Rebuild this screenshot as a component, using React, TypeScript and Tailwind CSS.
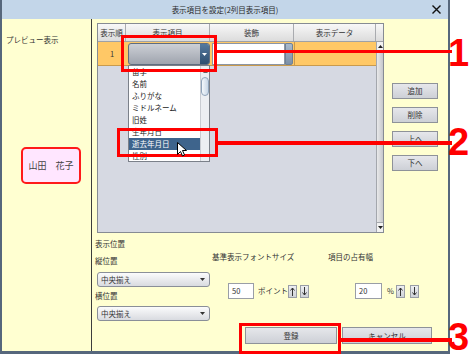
import type { ReactNode } from "react";

const items = ["苗字", "名前", "ふりがな", "ミドルネーム", "旧姓", "生年月日", "逝去年月日", "性別"];

const Tri = ({ color = "#333", up = false }: { color?: string; up?: boolean }) => (
  <svg width="5" height="3" viewBox="0 0 5 3">
    <path d={up ? "M0 3h5L2.5 0z" : "M0 0h5L2.5 3z"} fill={color} />
  </svg>
);

const Btn = ({ children, className = "" }: { children: ReactNode; className?: string }) => (
  <div
    className={`flex items-center justify-center border border-[#8e9299] bg-linear-to-b from-[#e6e7eb] to-[#cdd0d6] text-[#333] ${className}`}>
    {children}
  </div>
);

const Spin = ({ up }: { up?: boolean }) => (
  <div className="flex h-[13px] w-[9px] items-center justify-center border border-[#9a9ea6] bg-linear-to-b from-[#eeeff2] to-[#cfd2d8]">
    <svg width="5" height="9" viewBox="0 0 5 9">
      {up ? (
        <path d="M2.5 1v8M0.5 3.5L2.5 1l2 2.5" stroke="#333" strokeWidth="1" fill="none" />
      ) : (
        <path d="M2.5 0v8M0.5 5.5L2.5 8l2-2.5" stroke="#333" strokeWidth="1" fill="none" />
      )}
    </svg>
  </div>
);

const Select = ({ label }: { label: string }) => (
  <div className="flex h-[15px] w-[113px] items-center justify-between rounded-[3px] border border-[#8a8f98] bg-linear-to-b from-[#fbfbfc] to-[#d9dbe0] pl-[3px] pr-[4px]">
    <span>{label}</span>
    <Tri />
  </div>
);

const HeaderCell = ({ w, children }: { w: string; children?: ReactNode }) => (
  <div className={`flex ${w} items-center justify-center border-r border-[#a9abaf]`}>{children}</div>
);

const Table = () => (
  <div className="flex h-[210px] w-[287px] flex-col border border-[#868b93] bg-[#d6d9e2]">
    <div className="flex h-[18px] border-b border-[#9ea1a6] bg-linear-to-b from-[#f8f8f8] to-[#dcdcdc] text-[#333]">
      <HeaderCell w="w-[28px]">表示順</HeaderCell>
      <HeaderCell w="w-[84px]">表示項目</HeaderCell>
      <HeaderCell w="w-[84px]">装飾</HeaderCell>
      <HeaderCell w="w-[82px]">表示データ</HeaderCell>
      <div className="w-[7px]" />
    </div>
    <div className="flex flex-1">
      <div className="flex-1">
        <div className="flex h-[24px] border-b border-[#c99a4c] bg-[#ffc866]">
          <div className="flex w-[28px] items-center justify-center">1</div>
          <div className="relative w-[84px] pl-[2px] pt-[1px]">
            <div className="flex h-[22px] w-[82px] overflow-hidden rounded-[3px] border border-[#5f6d80] bg-linear-to-b from-[#cdd0d6] to-[#9fa4ae]">
              <div className="flex-1" />
              <div className="flex w-[9px] items-center justify-center bg-linear-to-b from-[#557a9f] to-[#2e4e6f]">
                <Tri color="#fff" />
              </div>
            </div>
            <div className="absolute left-[2px] top-full z-10 flex h-[97px] w-[82px] overflow-hidden border border-[#7b8089] bg-white text-[#222]">
              <div className="flex-1">
                {items.map((it) => (
                  <div
                    key={it}
                    className={`h-[12px] whitespace-nowrap pl-[3px] leading-[12px] ${it === "逝去年月日" ? "bg-[#3e648c] text-white" : ""}`}>
                    {it}
                  </div>
                ))}
              </div>
              <div className="flex w-[9px] flex-col items-center border-l border-[#c9ccd2] bg-[#eceef2]">
                <div className="flex h-[7px] items-end">
                  <Tri up color="#666" />
                </div>
                <div className="mt-[4px] h-[19px] w-[8px] rounded-full border border-[#8fa3ba] bg-linear-to-r from-[#f4f8fc] to-[#c8d6e6]" />
                <div className="flex-1" />
                <div className="flex h-[7px] items-start">
                  <Tri color="#666" />
                </div>
              </div>
            </div>
          </div>
          <div className="flex w-[84px] pl-[2px] pt-[1px]">
            <div className="h-[22px] w-[73px] border border-[#8c96a4] bg-white" />
            <div className="h-[22px] w-[8px] rounded-r-[2px] border border-[#6f8296] bg-linear-to-b from-[#a9bacc] to-[#7c90a8]" />
          </div>
          <div className="w-[82px] border-l border-[#c99a4c]" />
        </div>
      </div>
      <div className="flex w-[7px] flex-col border-l border-[#a4a7ad] bg-linear-to-r from-[#e9e9ea] to-[#c6c8cc]">
        <div className="flex h-[9px] items-center justify-center bg-[#f2f2f2]">
          <Tri up color="#222" />
        </div>
        <div className="flex-1" />
        <div className="flex h-[10px] items-center justify-center border-t border-[#a4a7ad] bg-[#f2f2f2]">
          <Tri color="#222" />
        </div>
      </div>
    </div>
  </div>
);

const Window = () => (
  <div className="flex h-[354px] w-[450px] flex-col border-x-2 border-b-[3px] border-[#56677c]">
    <div className="flex h-[19px] items-center bg-[#c3d6e9] text-[#2a2a2a]">
      <div className="w-[24px]" />
      <div className="flex-1 text-center">表示項目を設定(2列目表示項目)</div>
      <div className="flex w-[24px] items-center justify-center">
        <svg width="9" height="9" viewBox="0 0 9 9">
          <path d="M0.5 0.5l8 8M8.5 0.5l-8 8" stroke="#111" strokeWidth="1.4" />
        </svg>
      </div>
    </div>
    <div className="flex flex-1 bg-[#ffffd1] text-[#333]">
      <div className="flex w-[90px] flex-col border-r border-[#3d3d3d] pl-[4px] pt-[16px]">
        <div className="h-[10px] leading-[10px]">プレビュー表示</div>
        <div className="ml-[15px] mt-[102px] flex h-[37px] w-[60px] items-center justify-center rounded-[5px] border-2 border-[#ff1a1a] bg-[#ffe6ff] text-[9px] text-[#444]">
          山田　花子
        </div>
      </div>
      <div className="flex flex-1 flex-col pl-[5px] pt-[4px]">
        <div className="flex">
          <Table />
          <div className="ml-[8px] flex flex-col gap-[8px] pt-[60px]">
            <Btn className="h-[16px] w-[46px]">追加</Btn>
            <Btn className="h-[16px] w-[46px]">削除</Btn>
            <Btn className="h-[16px] w-[46px]">上へ</Btn>
            <Btn className="h-[16px] w-[46px]">下へ</Btn>
          </div>
        </div>
        <div className="-ml-[2px] mt-[5px] flex">
          <div className="flex w-[117px] flex-col">
            <div className="h-[12px] leading-[12px]">表示位置</div>
            <div className="mt-[5px] h-[12px] leading-[12px]">縦位置</div>
            <div className="ml-[2px] mt-[5px]">
              <Select label="中央揃え" />
            </div>
            <div className="mt-[3px] h-[12px] leading-[12px]">横位置</div>
            <div className="ml-[2px] mt-[4px]">
              <Select label="中央揃え" />
            </div>
          </div>
          <div className="flex w-[116px] flex-col pt-[13px]">
            <div className="h-[12px] whitespace-nowrap leading-[12px]">基準表示フォントサイズ</div>
            <div className="mt-[20px] flex items-center pl-[16px]">
              <div className="flex h-[16px] w-[26px] shrink-0 items-center border border-[#9a9ea6] bg-white pl-[3px]">50</div>
              <span className="ml-[4px] w-[28px] shrink-0 whitespace-nowrap">ポイント</span>
              <div className="ml-[2px] shrink-0">
                <Spin up />
              </div>
              <div className="ml-[3px] shrink-0">
                <Spin />
              </div>
            </div>
          </div>
          <div className="flex flex-col pt-[13px]">
            <div className="h-[12px] whitespace-nowrap leading-[12px]">項目の占有幅</div>
            <div className="mt-[20px] flex items-center pl-[27px]">
              <div className="flex h-[16px] w-[27px] shrink-0 items-center border border-[#9a9ea6] bg-white pl-[3px]">20</div>
              <span className="ml-[5px] w-[6px] shrink-0">%</span>
              <div className="ml-[3px] shrink-0">
                <Spin up />
              </div>
              <div className="ml-[5px] shrink-0">
                <Spin />
              </div>
            </div>
          </div>
        </div>
        <div className="ml-[148px] mt-[6px] flex gap-[5px]">
          <Btn className="h-[17px] w-[92px]">登録</Btn>
          <Btn className="h-[17px] w-[90px]">キャンセル</Btn>
        </div>
      </div>
    </div>
  </div>
);

const Callouts = () => (
  <div className="pointer-events-none absolute inset-0 z-20">
    <div className="absolute left-[121px] top-[35px] h-[37px] w-[96px] border-[3px] border-[#ff0000]" />
    <div className="absolute left-[217px] top-[50px] h-[3px] w-[235px] bg-[#ff0000]" />
    <div className="absolute left-[447px] top-[34px] w-[23px] text-center font-['Liberation_Sans',sans-serif] text-[38px] font-bold leading-none text-[#ff0000]">
      1
    </div>
    <div className="absolute left-[117px] top-[128px] h-[29px] w-[101px] border-[3px] border-[#ff0000]" />
    <div className="absolute left-[218px] top-[141px] h-[4px] w-[234px] bg-[#ff0000]" />
    <div className="absolute left-[447px] top-[123px] w-[23px] text-center font-['Liberation_Sans',sans-serif] text-[38px] font-bold leading-none text-[#ff0000]">
      2
    </div>
    <div className="absolute left-[239px] top-[323px] h-[31px] w-[102px] border-[3px] border-[#ff0000]" />
    <div className="absolute left-[340px] top-[338px] h-[4px] w-[112px] bg-[#ff0000]" />
    <div className="absolute left-[447px] top-[320px] w-[23px] text-center font-['Liberation_Sans',sans-serif] text-[38px] font-bold leading-[34px] text-[#ff0000]">
      3
    </div>
    <svg className="absolute left-[177px] top-[142px]" width="10" height="15" viewBox="0 0 10 15">
      <path d="M0.5 0.5v12l3-3 2 4.5 2-1-2-4.5h4z" fill="#fff" stroke="#000" strokeWidth="1" strokeLinejoin="round" />
    </svg>
  </div>
);

export default function App() {
  return (
    <div className="relative flex h-[354px] w-[470px] overflow-hidden bg-white font-['Noto_Sans_CJK_JP',sans-serif] text-[7.5px]">
      <Window />
      <Callouts />
    </div>
  );
}
